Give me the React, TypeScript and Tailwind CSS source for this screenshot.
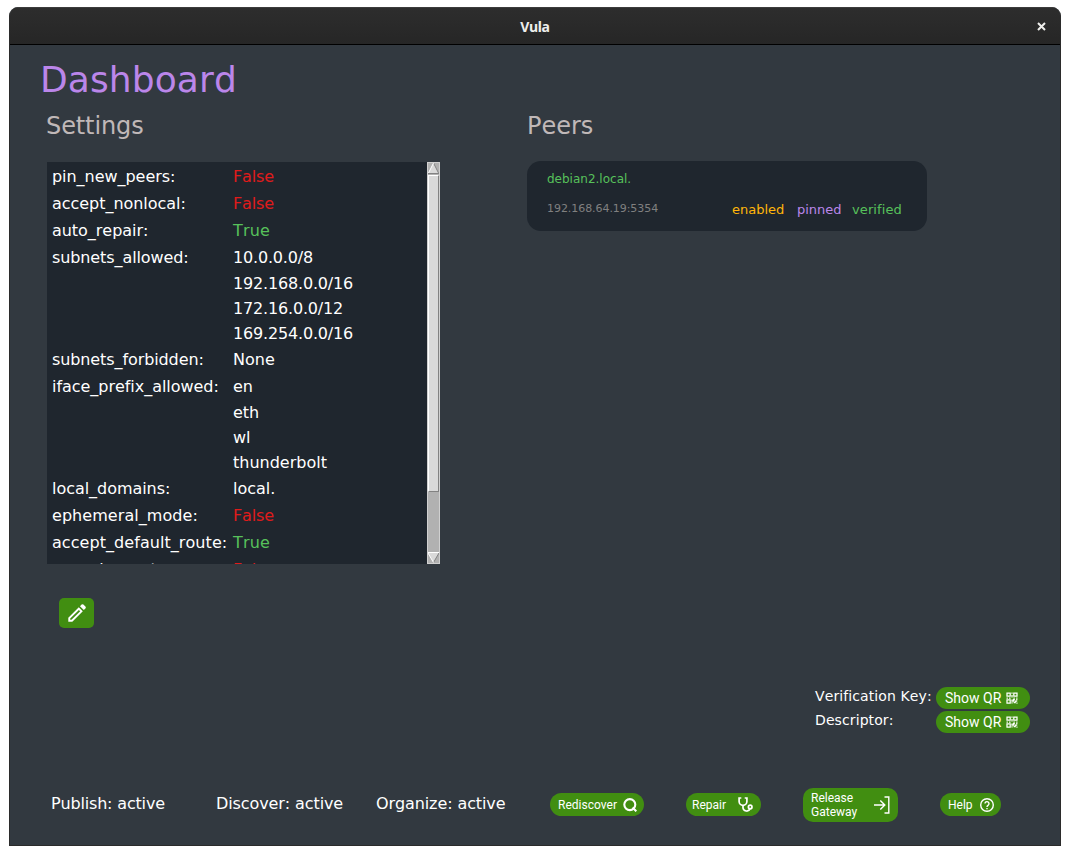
import React from "react";

type Setting = { label: string; values: string[] };

const settings: Setting[] = [
  { label: "pin_new_peers:", values: ["False"] },
  { label: "accept_nonlocal:", values: ["False"] },
  { label: "auto_repair:", values: ["True"] },
  { label: "subnets_allowed:", values: ["10.0.0.0/8", "192.168.0.0/16", "172.16.0.0/12", "169.254.0.0/16"] },
  { label: "subnets_forbidden:", values: ["None"] },
  { label: "iface_prefix_allowed:", values: ["en", "eth", "wl", "thunderbolt"] },
  { label: "local_domains:", values: ["local."] },
  { label: "ephemeral_mode:", values: ["False"] },
  { label: "accept_default_route:", values: ["True"] },
  { label: "record_events:", values: ["False"] },
];

function labelTracking(label: string) {
  if (label.startsWith("subnets")) return "tracking-[-0.1px]";
  if (label === "ephemeral_mode:" || label === "accept_default_route:") return "tracking-[0.06px]";
  return "tracking-[-0.04px]";
}

function valueStyle(value: string) {
  if (value === "False") return "text-[#e01b1b] tracking-[-0.15px]";
  if (value === "True") return "text-[#57c15b] tracking-[0.2px]";
  if (/^\d/.test(value)) return "text-white tracking-[-0.17px]";
  return "text-white";
}

function SettingRow({ label, values }: Setting) {
  return (
    <div className="flex shrink-0">
      <div className={`w-[181px] shrink-0 leading-[27px] ${labelTracking(label)}`}>{label}</div>
      <div>
        {values.map((v, i) => (
          <div key={v} className={`${i === 0 ? "leading-[27px]" : "leading-[25px]"} ${valueStyle(v)}`}>
            {v}
          </div>
        ))}
      </div>
    </div>
  );
}

function Scrollbar() {
  return (
    <div className="flex w-[13px] shrink-0 flex-col border border-[#d0d0d0] bg-[#b1b1b1]">
      <svg width="11" height="12" viewBox="0 0 11 12" className="shrink-0">
        <path d="M5.5 0 L11 11 H0 Z" fill="#d9d9d9" />
        <path d="M0 10.5 H11 M11 11 L5.5 0" stroke="#828282" fill="none" />
        <path d="M5.5 0 L0.5 10" stroke="#fff" />
      </svg>
      <div className="h-[317px] shrink-0 border border-t-white border-l-white border-r-[#828282] border-b-[#828282] bg-[#d9d9d9]" />
      <div className="flex-1" />
      <svg width="11" height="11" viewBox="0 0 11 11" className="shrink-0">
        <path d="M0 1 H11 L5.5 10.5 Z" fill="#d9d9d9" />
        <path d="M11 1 L5.5 10.5" stroke="#828282" />
        <path d="M0 .5 H11 M0 1 L5.5 10.5" stroke="#fff" fill="none" />
      </svg>
    </div>
  );
}

function QrIcon() {
  return (
    <svg width="12" height="12" viewBox="0 0 12 12" fill="none" stroke="#fff" strokeWidth="1.25" className="shrink-0">
      <path d="M1 1h3.2v3.2H1zM7.8 1h3.2v3.2H7.8zM1 7.8h3.2v3.2H1z" />
      <path d="M6 .5v1.2M6 3v2.6M.5 6h1.4M3 6h1.6M7.4 6h1.4M10.2 6h1.3M6 7.4v1.6h1.5V7.6h1.4M6 10.2v1.3M7.6 10.6h1.6V9h2M10.8 7v1.2M10.4 11h1.1" />
    </svg>
  );
}

function SearchIcon() {
  return (
    <svg width="14" height="14" viewBox="0 0 14 14" fill="none" stroke="#fff" strokeWidth="2.1" className="shrink-0">
      <circle cx="6.8" cy="6.6" r="5.5" />
      <path d="M9.6 9.6l3.7 3.7" />
    </svg>
  );
}

function StethoscopeIcon() {
  return (
    <svg width="15" height="16" viewBox="0 0 15 16" fill="none" stroke="#fff" strokeWidth="1.7" className="shrink-0">
      <path d="M3.3 1H1.1v3.4a3.9 3.9 0 0 0 7.8 0V1H6.7" />
      <path d="M5 8.4v2.7a3.8 3.8 0 0 0 7.2.6" />
      <circle cx="12.2" cy="9.9" r="1.8" />
    </svg>
  );
}

function ExitIcon() {
  return (
    <svg width="16" height="18" viewBox="0 0 16 18" fill="none" stroke="#fff" strokeWidth="1.4" className="shrink-0">
      <path d="M0 9h10.5M6.3 4.5L10.8 9l-4.5 4.5M10.5 1h4.3v16h-4.3" />
    </svg>
  );
}

function HelpIcon() {
  return (
    <svg width="14" height="14" viewBox="0 0 14 14" fill="none" stroke="#fff" strokeWidth="1.4" className="shrink-0">
      <circle cx="7" cy="7" r="6.3" />
      <path d="M5 5.6a2 2 0 1 1 3.2 1.6C7.4 7.8 7 8 7 9" />
      <path d="M7 9.9v1.4" />
    </svg>
  );
}

function PencilIcon() {
  return (
    <svg width="18" height="18" viewBox="0 0 18 18" className="shrink-0">
      <path
        fill="#fff"
        fillRule="evenodd"
        d="M10.8 3.2l4 4L4.3 17.7H.3v-4zM2.2 14.5v1.3h1.3l8.7-8.6-1.3-1.3zM12 2.2L13.6.6a1.3 1.3 0 0 1 1.8 0l2 2a1.3 1.3 0 0 1 0 1.8L15.8 6z"
      />
    </svg>
  );
}

function QrButton() {
  return (
    <button className="flex h-[22px] w-[94px] items-center gap-[5px] rounded-full bg-[#418e11] pl-[9px] font-['Roboto',sans-serif] text-[14px] leading-[22px] tracking-normal text-white">
      <span>Show QR</span>
      <QrIcon />
    </button>
  );
}

export default function App() {
  return (
    <div className="h-[855px] w-[1070px] overflow-hidden bg-white pt-[7px] pl-[9px] font-['DejaVu_Sans',sans-serif] text-white [font-kerning:none]">
      <div className="flex h-[839px] w-[1052px] flex-col overflow-hidden rounded-t-[9px] border border-t-0 border-[#2b2b2b] bg-[#323940]">
        <header className="flex h-[38px] shrink-0 items-center border-t border-b border-t-[#3c3c3c] border-b-black bg-linear-to-b from-[#2d2d2d] to-[#262626]">
          <div className="w-[40px]" />
          <div className="flex-1 pt-px text-center font-['Noto_Sans',sans-serif] text-[14px] leading-[20px] font-bold tracking-[-0.3px] text-[#eeeeec] [font-kerning:normal]">
            Vula
          </div>
          <div className="flex w-[40px] pl-[17px]">
            <svg width="9" height="9" viewBox="0 0 9 9" stroke="#eeeeec" strokeWidth="2">
              <path d="M1 1l7 7M8 1L1 8" />
            </svg>
          </div>
        </header>

        <h1 className="mt-[13px] ml-[30px] h-[44px] text-[36px] leading-[44px] tracking-[0.1px] text-[#bb86ea]">Dashboard</h1>

        <div className="flex">
          <section className="ml-[36px] w-[481px]">
            <h2 className="h-[60px] pt-[8px] text-[24px] leading-[32px] tracking-[-0.1px] text-[#c0b8b8]">Settings</h2>
            <div className="ml-px flex h-[402px] w-[393px] overflow-hidden bg-[#1f262e]">
              <div className="flex w-[380px] flex-col overflow-hidden pt-px pl-[5px] text-[16px]">
                {settings.map((s) => (
                  <SettingRow key={s.label} {...s} />
                ))}
              </div>
              <Scrollbar />
            </div>
            <button className="mt-[34px] ml-[13px] flex h-[30px] w-[35px] items-center justify-center rounded-[5px] bg-[#418e11]">
              <PencilIcon />
            </button>
          </section>

          <section>
            <h2 className="h-[59px] pt-[8px] text-[24px] leading-[32px] text-[#c0b8b8]">Peers</h2>
            <div className="flex h-[70px] w-[400px] flex-col rounded-[14px] bg-[#1f262e] pt-[9px] pl-[20px]">
              <div className="text-[12px] leading-[18px] text-[#57c15b]">debian2.local.</div>
              <div className="mt-[12px] flex items-center leading-[18px]">
                <span className="w-[185px] pb-px text-[11px] tracking-[-0.06px] text-[#808080]">192.168.64.19:5354</span>
                <span className="w-[65px] pt-px text-[13px] text-[#ffb60a]">enabled</span>
                <span className="w-[55px] pt-px text-[13px] text-[#bb86ea]">pinned</span>
                <span className="pt-px text-[13px] tracking-[0.1px] text-[#57c15b]">verified</span>
              </div>
            </div>
          </section>
        </div>

        <div className="mt-[59px] ml-[805px] flex flex-col gap-[2px] text-[14px] tracking-[0.1px]">
          <div className="flex">
            <span className="w-[121px] leading-[18px] whitespace-nowrap">Verification Key:</span>
            <QrButton />
          </div>
          <div className="flex">
            <span className="w-[121px] leading-[18px]">Descriptor:</span>
            <QrButton />
          </div>
        </div>

        <footer className="mt-[54px] flex h-[36px] items-center pl-[41px] text-[16px] tracking-[-0.1px] whitespace-nowrap">
          <span className="w-[165px] pb-[2px] tracking-[-0.17px]">Publish: active</span>
          <span className="w-[160px] pb-[2px]">Discover: active</span>
          <span className="w-[174px] pb-[2px]">Organize: active</span>
          <div className="flex items-center font-['Roboto',sans-serif] text-[12px] leading-[14px] tracking-normal">
            <button className="mb-px flex h-[23px] w-[94px] items-center justify-between rounded-full bg-[#418e11] pr-[7px] pl-[8px]">
              <span>Rediscover</span>
              <SearchIcon />
            </button>
            <button className="mb-px ml-[42px] flex h-[23px] w-[75px] items-center justify-between rounded-full bg-[#418e11] pr-[8px] pl-[6px]">
              <span>Repair</span>
              <StethoscopeIcon />
            </button>
            <button className="ml-[42px] flex h-[34px] w-[95px] items-center justify-between rounded-[10px] bg-[#418e11] pr-[8px] pl-[8px]">
              <span className="text-left">
                Release
                <br />
                Gateway
              </span>
              <ExitIcon />
            </button>
            <button className="mb-px ml-[42px] flex h-[23px] w-[61px] items-center justify-between rounded-full bg-[#418e11] pr-[7px] pl-[8px]">
              <span>Help</span>
              <HelpIcon />
            </button>
          </div>
        </footer>
      </div>
    </div>
  );
}
